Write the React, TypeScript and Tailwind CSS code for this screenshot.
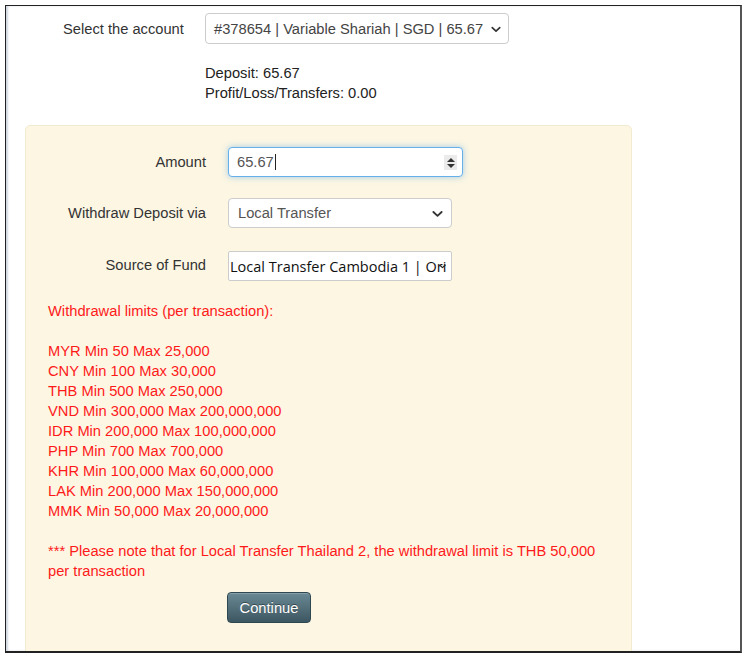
import React from "react";

function Chevron({ className }: { className?: string }) {
  return (
    <svg viewBox="0 0 12 8" className={className} fill="none" stroke="currentColor" strokeWidth="2" strokeLinecap="round" strokeLinejoin="round">
      <path d="M1.5 1.8 L6 6 L10.5 1.8" />
    </svg>
  );
}

const limits = [
  "MYR Min 50 Max 25,000",
  "CNY Min 100 Max 30,000",
  "THB Min 500 Max 250,000",
  "VND Min 300,000 Max 200,000,000",
  "IDR Min 200,000 Max 100,000,000",
  "PHP Min 700 Max 700,000",
  "KHR Min 100,000 Max 60,000,000",
  "LAK Min 200,000 Max 150,000,000",
  "MMK Min 50,000 Max 20,000,000",
];

export default function App() {
  return (
    <div className="w-[748px] h-[659px] bg-white pl-[5px] pt-[5px] text-[14.7px] leading-[20px] text-[#333]" style={{ fontFamily: '"Liberation Sans", Arial, sans-serif' }}>
      <div className="w-[737px] h-[648px] border-t border-l border-[#222] border-r-2 border-b-2 border-r-[#555] border-b-[#222] overflow-hidden shadow-[inset_2px_0_2px_rgba(120,140,170,0.35)]">
        {/* account row */}
        <div className="flex items-center pl-[57px] mt-[7px]">
          <div className="w-[142px]">Select the account</div>
          <div className="relative w-[304px] h-[31px] border border-[#ccc] rounded-[4px] bg-white flex items-center pl-[8px] text-[#444]">
            <span>#378654 | Variable Shariah | SGD | 65.67</span>
            <Chevron className="absolute right-[7px] top-[12px] w-[10px] h-[7px] text-[#333]" />
          </div>
        </div>

        <div className="pl-[199px] mt-[19px] text-[#222]">
          <div>Deposit: 65.67</div>
          <div>Profit/Loss/Transfers: 0.00</div>
        </div>

        {/* card */}
        <div className="ml-[19px] mt-[22px] w-[607px] h-[560px] bg-[#fcf6e3] border border-[#f3ebcf] rounded-[5px] px-[22px] pt-[21px]">
          <div className="flex items-center">
            <div className="w-[158px] text-right -mt-[1px]">Amount</div>
            <div className="ml-[22px] relative w-[235px] h-[30px] border border-[#66afe9] rounded-[4px] bg-white shadow-[0_0_6px_rgba(102,175,233,0.6)] flex items-center pl-[8px] text-[#555]">
              <span>65.67</span>
              <span className="w-px h-[16px] bg-[#222] ml-[1px]" />
              <div className="absolute right-[5px] top-[7px] w-[13px] h-[15px] bg-[#ebebeb] flex flex-col items-center justify-center gap-[2px]">
                <svg viewBox="0 0 8 4" className="w-[8px] h-[4px]"><path d="M0 4 L4 0 L8 4 Z" fill="#333" /></svg>
                <svg viewBox="0 0 8 4" className="w-[8px] h-[4px]"><path d="M0 0 L4 4 L8 0 Z" fill="#333" /></svg>
              </div>
            </div>
          </div>

          <div className="flex items-center mt-[21px]">
            <div className="w-[158px] text-right">Withdraw Deposit via</div>
            <div className="ml-[22px] relative w-[224px] h-[30px] border border-[#ccc] rounded-[4px] bg-white flex items-center pl-[9px] text-[#555]">
              <span>Local Transfer</span>
              <Chevron className="absolute right-[8px] top-[11px] w-[11px] h-[8px] text-[#333]" />
            </div>
          </div>

          <div className="flex items-center mt-[23px]">
            <div className="w-[158px] text-right -mt-[2px]">Source of Fund</div>
            <div className="ml-[22px] relative w-[224px] h-[30px] border border-[#ccc] rounded-[2px] bg-white flex items-center pl-[1px] overflow-hidden whitespace-nowrap text-[#111]" style={{ fontFamily: '"Open Sans", "Noto Sans", sans-serif' }}>
              <span className="text-[14.5px] pt-[2px]">Local Transfer Cambodia 1 | Ori</span>
              <Chevron className="absolute right-[5px] top-[12px] w-[7px] h-[5px] text-[#222]" />
            </div>
          </div>

          <div className="mt-[20px] text-[#ff1a1a]">
            <div>Withdrawal limits (per transaction):</div>
            <div className="h-[20px]" />
            {limits.map((l) => (
              <div key={l}>{l}</div>
            ))}
            <div className="h-[20px]" />
            <div>*** Please note that for Local Transfer Thailand 2, the withdrawal limit is THB 50,000 per transaction</div>
          </div>

          <div className="mt-[11px] ml-[179px]">
            <button className="w-[84px] h-[31px] rounded-[4px] border border-[#2f4751] bg-gradient-to-b from-[#6a8994] to-[#3d5762] text-white text-[14.7px] shadow-[inset_0_1px_0_rgba(255,255,255,0.2)] [text-shadow:0_-1px_0_rgba(0,0,0,0.4)]">
              Continue
            </button>
          </div>
        </div>
      </div>
    </div>
  );
}
